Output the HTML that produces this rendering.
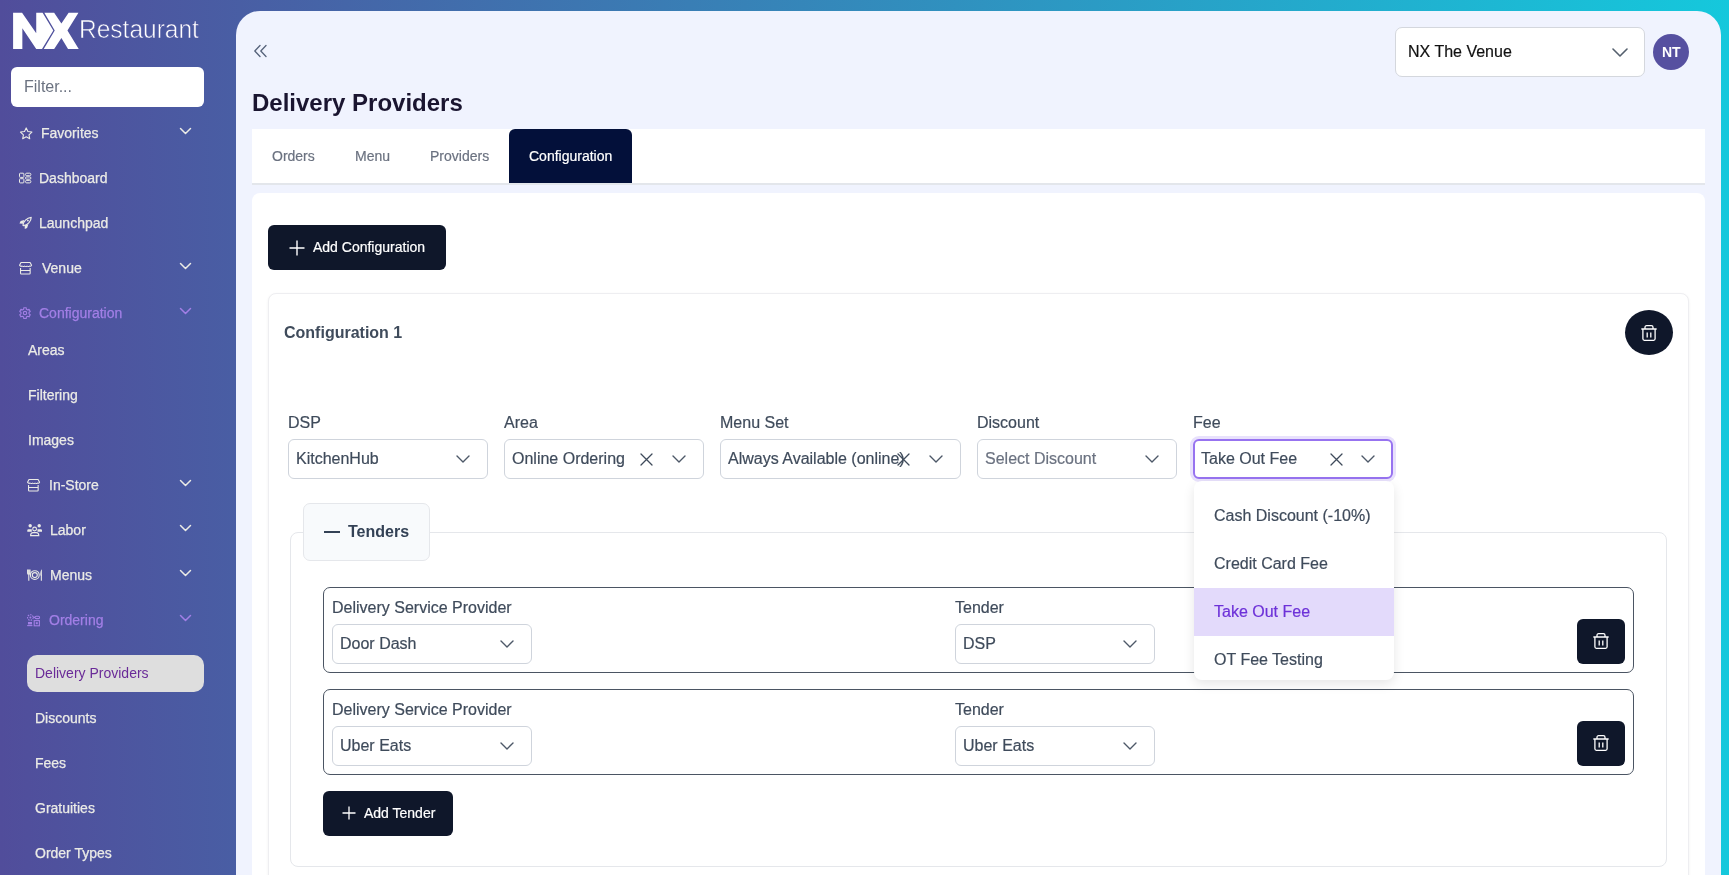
<!DOCTYPE html>
<html><head><meta charset="utf-8">
<style>
html,body{margin:0;padding:0;width:1729px;height:875px;overflow:hidden;font-family:"Liberation Sans",sans-serif;}
body{position:relative;background:linear-gradient(90deg,#514d9b 0%,#15c8dc 100%);}
.a{position:absolute;}
.t{position:absolute;white-space:nowrap;line-height:1;will-change:transform;}
.side{color:#e6e6ee;font-size:14px;}
.ic{position:absolute;}
.panel{position:absolute;left:236px;top:11px;width:1485px;height:900px;background:#f0f3fe;border-radius:24px;}
.sel{position:absolute;background:#fff;border:1px solid #cfd4dc;border-radius:6px;box-sizing:border-box;}
.lbl{position:absolute;white-space:nowrap;line-height:1;font-size:16px;color:#475569;}
.btn{position:absolute;background:#0f172a;border-radius:6px;}
</style></head><body>

<!-- SIDEBAR -->
<svg class="a" style="left:5px;top:5px" width="100" height="50" viewBox="0 0 1729 864">
<polygon fill="#fff" points="140,135 295,135 540,490 540,135 650,135 835,440 640,760 540,760 300,400 300,760 140,760"/>
<polygon fill="#fff" points="680,135 850,135 975,320 1100,135 1270,135 1080,440 1275,760 1090,760 975,570 850,760 670,760 860,440"/>
</svg>
<div class="t" style="left:79.3px;top:18.3px;font-size:24.5px;color:#fff;-webkit-text-stroke:0.55px #4e559f;transform:scaleY(1.08);transform-origin:0 21px;">Restaurant</div>

<div class="a" style="left:11px;top:67px;width:193px;height:40px;background:#fff;border-radius:6px;"></div>
<div class="t" style="left:24px;top:79px;font-size:16px;color:#6b7280;">Filter...</div>

<!--SIDE-->
<svg class="ic" style="left:18px;top:126px" width="16" height="15" viewBox="18 126 16 15"><polygon points="26.20,127.90 27.90,131.55 31.91,132.05 28.96,134.80 29.73,138.75 26.20,136.80 22.67,138.75 23.44,134.80 20.49,132.05 24.50,131.55" fill="none" stroke="#ebebe6" stroke-width="1.1" stroke-linejoin="round"/></svg>
<svg class="ic" style="left:18px;top:172px" width="15" height="13" viewBox="18 172 15 13"><rect x="19.5" y="173.2" width="4.4" height="4.2" rx="0.8" fill="none" stroke="#ebebe6" stroke-width="1"/><rect x="19.5" y="178.7" width="4.4" height="4.2" rx="0.8" fill="none" stroke="#ebebe6" stroke-width="1"/><rect x="25.5" y="173.2" width="5.4" height="2.5" rx="1.2" fill="none" stroke="#ebebe6" stroke-width="1"/><rect x="25.5" y="176.9" width="5.4" height="2.3" rx="1.1" fill="none" stroke="#ebebe6" stroke-width="1"/><rect x="25.5" y="180.4" width="5.4" height="2.5" rx="1.2" fill="none" stroke="#ebebe6" stroke-width="1"/></svg>
<svg class="ic" style="left:18px;top:215px" width="15" height="15" viewBox="18 215 15 15"><g transform="translate(19 216.5)"><path d="M3.9 8.7 C4.3 5.2 7.6 1.2 12.2 0.8 C12.2 5 8.6 8.6 4.4 9.2 Z" fill="none" stroke="#ebebe6" stroke-width="1.2" stroke-linejoin="round"/><path d="M5.2 3.4 L1.6 4.6 L0.5 7 L4.3 7.3 Z M9.4 7.7 L8.1 11.5 L5.8 12.6 L5.6 8.8 Z" fill="#ebebe6"/><circle cx="8.9" cy="4.1" r="0.9" fill="#ebebe6"/></g></svg>
<svg class="ic" style="left:18.3px;top:261px" width="16" height="15" viewBox="18.3 261 16 15"><g transform="translate(19.3 262)"><path d="M0.55 3.3 L2 0.5 H11.1 L12.55 3.3 Q11.8 4.8 10.4 4.1 Q9.3 4.9 8.05 4.1 Q6.85 4.9 5.55 4.1 Q4.35 4.9 3.1 4.1 Q1.5 4.8 0.55 3.3 Z" fill="none" stroke="#ebebe6" stroke-width="1.1" stroke-linejoin="round"/><path d="M1.55 6 V11.2 Q1.55 12 2.35 12 H10.35 Q11.15 12 11.15 11.2 V6 M1.55 8.5 H11.15" fill="none" stroke="#ebebe6" stroke-width="1.1"/></g></svg>
<svg class="ic" style="left:17px;top:305px" width="16" height="16" viewBox="17 305 16 16"><polygon points="23.76,307.74 26.24,307.74 26.33,309.22 27.69,310.01 29.02,309.35 30.26,311.49 29.02,312.32 29.02,313.88 30.26,314.71 29.02,316.85 27.69,316.19 26.33,316.98 26.24,318.46 23.76,318.46 23.67,316.98 22.31,316.19 20.98,316.85 19.74,314.71 20.98,313.88 20.98,312.32 19.74,311.49 20.98,309.35 22.31,310.01 23.67,309.22" fill="none" stroke="#a27fe6" stroke-width="1.1" stroke-linejoin="round"/><circle cx="25" cy="313.1" r="1.7" fill="none" stroke="#a27fe6" stroke-width="1.1"/></svg>
<svg class="ic" style="left:26.2px;top:478px" width="16" height="15" viewBox="26.2 478 16 15"><g transform="translate(27.2 479)"><path d="M0.55 3.3 L2 0.5 H11.1 L12.55 3.3 Q11.8 4.8 10.4 4.1 Q9.3 4.9 8.05 4.1 Q6.85 4.9 5.55 4.1 Q4.35 4.9 3.1 4.1 Q1.5 4.8 0.55 3.3 Z" fill="none" stroke="#ebebe6" stroke-width="1.1" stroke-linejoin="round"/><path d="M1.55 6 V11.2 Q1.55 12 2.35 12 H10.35 Q11.15 12 11.15 11.2 V6 M1.55 8.5 H11.15" fill="none" stroke="#ebebe6" stroke-width="1.1"/></g></svg>
<svg class="ic" style="left:26px;top:523px" width="17" height="15" viewBox="26 523 17 15"><circle cx="30.2" cy="525.8" r="1.7" fill="#ebebe6"/><circle cx="39.2" cy="525.8" r="1.7" fill="#ebebe6"/><path d="M27.3 531.8 V530.3 Q27.3 529.2 28.5 529.2 H31.8 V531.8 Z M42 531.8 V530.3 Q42 529.2 40.8 529.2 H37.5 V531.8 Z" fill="#ebebe6"/><circle cx="34.6" cy="529" r="1.9" fill="none" stroke="#ebebe6" stroke-width="1.1"/><path d="M30.6 535.6 Q30.6 532.6 33 532.6 H36.3 Q38.8 532.6 38.8 535.6 Z" fill="none" stroke="#ebebe6" stroke-width="1.1"/></svg>
<svg class="ic" style="left:26px;top:568px" width="17" height="14" viewBox="26 568 17 14"><path d="M27.6 569.5 V573.3 Q27.6 574.5 28.8 574.5 Q30 574.5 30 573.3 V569.5 M28.8 569.5 V580.7" fill="none" stroke="#ebebe6" stroke-width="1.1"/><path d="M41.9 569.3 C40.5 570.5 40.2 572.6 40.3 575.6 H41.9 Z" fill="#ebebe6"/><path d="M41.35 575 V580.8" fill="none" stroke="#ebebe6" stroke-width="1.1"/><circle cx="34.8" cy="575.1" r="4.4" fill="none" stroke="#ebebe6" stroke-width="1.1"/><circle cx="34.8" cy="575.1" r="2.5" fill="none" stroke="#ebebe6" stroke-width="1.1"/></svg>
<svg class="ic" style="left:26px;top:613px" width="15" height="15" viewBox="26 613 15 15"><circle cx="30.4" cy="617.5" r="2.8" fill="none" stroke="#a27fe6" stroke-width="1.1" stroke-dasharray="1.6 0.9"/><circle cx="30.4" cy="617.5" r="1" fill="#a27fe6"/><path d="M33.2 617.4 H35" fill="none" stroke="#a27fe6" stroke-width="1.1"/><rect x="35" y="616.2" width="4.6" height="2.4" rx="1.2" fill="none" stroke="#a27fe6" stroke-width="1.1"/><rect x="28" y="622" width="4" height="2.4" fill="#a27fe6"/><path d="M27.2 625.6 H32.4" fill="none" stroke="#a27fe6" stroke-width="1.1"/><rect x="34.2" y="620.6" width="5.2" height="5.2" fill="none" stroke="#a27fe6" stroke-width="1.1"/><rect x="35.8" y="622.2" width="2" height="2" fill="#a27fe6"/></svg>
<div class="t" style="left:41px;top:126.0px;font-size:14px;color:#ebebe6;-webkit-text-stroke:0.25px #ebebe6;">Favorites</div>
<svg class="ic" style="left:179px;top:127px" width="13" height="8" viewBox="0 0 13 8"><path d="M1.5 1.5 L6.5 6.5 L11.5 1.5" fill="none" stroke="#ebebe6" stroke-width="1.5" stroke-linecap="round" stroke-linejoin="round"/></svg>
<div class="t" style="left:39.3px;top:171.0px;font-size:14px;color:#ebebe6;-webkit-text-stroke:0.25px #ebebe6;">Dashboard</div>
<div class="t" style="left:39.3px;top:216.0px;font-size:14px;color:#ebebe6;-webkit-text-stroke:0.25px #ebebe6;">Launchpad</div>
<div class="t" style="left:41.5px;top:261.0px;font-size:14px;color:#ebebe6;-webkit-text-stroke:0.25px #ebebe6;">Venue</div>
<svg class="ic" style="left:179px;top:262px" width="13" height="8" viewBox="0 0 13 8"><path d="M1.5 1.5 L6.5 6.5 L11.5 1.5" fill="none" stroke="#ebebe6" stroke-width="1.5" stroke-linecap="round" stroke-linejoin="round"/></svg>
<div class="t" style="left:39.4px;top:306.0px;font-size:14px;color:#a27fe6;-webkit-text-stroke:0.25px #a27fe6;">Configuration</div>
<svg class="ic" style="left:179px;top:307px" width="13" height="8" viewBox="0 0 13 8"><path d="M1.5 1.5 L6.5 6.5 L11.5 1.5" fill="none" stroke="#a27fe6" stroke-width="1.5" stroke-linecap="round" stroke-linejoin="round"/></svg>
<div class="t" style="left:48.7px;top:478.0px;font-size:14px;color:#ebebe6;-webkit-text-stroke:0.25px #ebebe6;">In-Store</div>
<svg class="ic" style="left:179px;top:479px" width="13" height="8" viewBox="0 0 13 8"><path d="M1.5 1.5 L6.5 6.5 L11.5 1.5" fill="none" stroke="#ebebe6" stroke-width="1.5" stroke-linecap="round" stroke-linejoin="round"/></svg>
<div class="t" style="left:50px;top:523.0px;font-size:14px;color:#ebebe6;-webkit-text-stroke:0.25px #ebebe6;">Labor</div>
<svg class="ic" style="left:179px;top:524px" width="13" height="8" viewBox="0 0 13 8"><path d="M1.5 1.5 L6.5 6.5 L11.5 1.5" fill="none" stroke="#ebebe6" stroke-width="1.5" stroke-linecap="round" stroke-linejoin="round"/></svg>
<div class="t" style="left:49.8px;top:568.0px;font-size:14px;color:#ebebe6;-webkit-text-stroke:0.25px #ebebe6;">Menus</div>
<svg class="ic" style="left:179px;top:569px" width="13" height="8" viewBox="0 0 13 8"><path d="M1.5 1.5 L6.5 6.5 L11.5 1.5" fill="none" stroke="#ebebe6" stroke-width="1.5" stroke-linecap="round" stroke-linejoin="round"/></svg>
<div class="t" style="left:48.7px;top:613.0px;font-size:14px;color:#a27fe6;-webkit-text-stroke:0.25px #a27fe6;">Ordering</div>
<svg class="ic" style="left:179px;top:614px" width="13" height="8" viewBox="0 0 13 8"><path d="M1.5 1.5 L6.5 6.5 L11.5 1.5" fill="none" stroke="#a27fe6" stroke-width="1.5" stroke-linecap="round" stroke-linejoin="round"/></svg>
<div class="t" style="left:27.5px;top:343.0px;font-size:14px;color:#ebebe6;-webkit-text-stroke:0.25px #ebebe6;">Areas</div>
<div class="t" style="left:27.5px;top:388.0px;font-size:14px;color:#ebebe6;-webkit-text-stroke:0.25px #ebebe6;">Filtering</div>
<div class="t" style="left:27.5px;top:433.0px;font-size:14px;color:#ebebe6;-webkit-text-stroke:0.25px #ebebe6;">Images</div>
<div class="a" style="left:27px;top:655px;width:177px;height:37px;background:#dedede;border-radius:10px;"></div>
<div class="t" style="left:35px;top:666.0px;font-size:14px;color:#6a2b98;">Delivery Providers</div>
<div class="t" style="left:35px;top:711.0px;font-size:14px;color:#ebebe6;-webkit-text-stroke:0.25px #ebebe6;">Discounts</div>
<div class="t" style="left:35px;top:756.0px;font-size:14px;color:#ebebe6;-webkit-text-stroke:0.25px #ebebe6;">Fees</div>
<div class="t" style="left:35px;top:801.0px;font-size:14px;color:#ebebe6;-webkit-text-stroke:0.25px #ebebe6;">Gratuities</div>
<div class="t" style="left:35px;top:846.0px;font-size:14px;color:#ebebe6;-webkit-text-stroke:0.25px #ebebe6;">Order Types</div>
<!--/SIDE-->

<!-- MAIN PANEL -->
<div class="panel"></div>
<!--MAIN-->
<svg class="ic" style="left:253px;top:44px" width="15" height="14" viewBox="0 0 15 14"><path d="M7 1.5 L1.8 7 L7 12.5 M13 1.5 L7.8 7 L13 12.5" fill="none" stroke="#55627a" stroke-width="1.3" stroke-linecap="round" stroke-linejoin="round"/></svg>
<div class="t" style="left:252px;top:90.5px;font-size:24px;color:#1a1530;font-weight:700">Delivery Providers</div>
<div class="sel" style="left:1395px;top:27px;width:250px;height:50px;border-color:#d4d7dd;border-radius:7px"></div>
<div class="t" style="left:1408px;top:43.5px;font-size:16px;color:#111;-webkit-text-stroke:0.2px #111;">NX The Venue</div>
<svg class="ic" style="left:1612px;top:48px" width="16" height="9" viewBox="0 0 16 9"><path d="M1 1 L8.0 8 L15 1" fill="none" stroke="#55606e" stroke-width="1.6" stroke-linecap="round" stroke-linejoin="round"/></svg>
<div class="a" style="left:1653px;top:34px;width:36px;height:36px;border-radius:50%;background:#5650a0"></div>
<div class="t" style="left:1661.5px;top:45.0px;font-size:14px;color:#fff;font-weight:700">NT</div>
<div class="a" style="left:252px;top:129px;width:1453px;height:54px;background:#fff;border-bottom:2px solid #e3e6eb"></div>
<div class="t" style="left:272px;top:149.0px;font-size:14px;color:#6b7280;-webkit-text-stroke:0.2px #6b7280;">Orders</div>
<div class="t" style="left:355px;top:149.0px;font-size:14px;color:#6b7280;-webkit-text-stroke:0.2px #6b7280;">Menu</div>
<div class="t" style="left:430px;top:149.0px;font-size:14px;color:#6b7280;-webkit-text-stroke:0.2px #6b7280;">Providers</div>
<div class="a" style="left:509px;top:129px;width:123px;height:54px;background:#03103a;border-radius:6px 6px 0 0"></div>
<div class="t" style="left:528.5px;top:149.0px;font-size:14px;color:#fff;-webkit-text-stroke:0.2px #fff;">Configuration</div>
<div class="a" style="left:252px;top:193px;width:1453px;height:720px;background:#fff;border-radius:8px"></div>
<div class="btn" style="left:268px;top:225px;width:178px;height:45px"></div>
<svg class="ic" style="left:289px;top:240px" width="16" height="16" viewBox="0 0 16 16"><path d="M8.0 0.5 V15.5 M0.5 8.0 H15.5" stroke="#fff" stroke-width="1.4"/></svg>
<div class="t" style="left:312.5px;top:240.0px;font-size:14px;color:#fff;-webkit-text-stroke:0.2px #fff">Add Configuration</div>
<div class="a" style="left:268px;top:293px;width:1421px;height:620px;background:#fff;border:1px solid #eeeef1;border-radius:8px;box-sizing:border-box;box-shadow:0 1px 3px rgba(0,0,0,0.06)"></div>
<div class="t" style="left:284px;top:325.0px;font-size:16px;color:#3f4b5b;font-weight:700">Configuration 1</div>
<div class="a" style="left:1625px;top:310px;width:48px;height:45px;border-radius:50%;background:#0f172a"></div>
<svg class="ic" style="left:1641px;top:325px" width="16" height="16" viewBox="0 0 16 16"><path d="M4 4 V2.3 C4 1.3 4.6 0.7 5.6 0.7 H10.4 C11.4 0.7 12 1.3 12 2.3 V4" fill="none" stroke="#fff" stroke-width="1.3"/><path d="M0.8 4 H15.2" stroke="#fff" stroke-width="1.3" stroke-linecap="round"/><path d="M1.9 4 V13.8 C1.9 14.7 2.5 15.3 3.4 15.3 H12.6 C13.5 15.3 14.1 14.7 14.1 13.8 V4" fill="none" stroke="#fff" stroke-width="1.3"/><path d="M6.2 7.4 V12.4 M9.8 7.4 V12.4" stroke="#fff" stroke-width="1.3"/></svg>
<div class="t" style="left:288px;top:415.0px;font-size:16px;color:#3f4b5b;-webkit-text-stroke:0.2px #3f4b5b;">DSP</div>
<div class="sel" style="left:288px;top:439px;width:200px;height:40px"></div>
<div class="t" style="left:296px;top:451.0px;font-size:16px;color:#3f4b5b;-webkit-text-stroke:0.2px #3f4b5b;">KitchenHub</div>
<svg class="ic" style="left:456px;top:455.0px" width="14" height="8" viewBox="0 0 14 8"><path d="M1 1 L7.0 7 L13 1" fill="none" stroke="#4d5868" stroke-width="1.4" stroke-linecap="round" stroke-linejoin="round"/></svg>
<div class="t" style="left:504px;top:415.0px;font-size:16px;color:#3f4b5b;-webkit-text-stroke:0.2px #3f4b5b;">Area</div>
<div class="sel" style="left:504px;top:439px;width:200px;height:40px"></div>
<div class="t" style="left:512px;top:451.0px;font-size:16px;color:#3f4b5b;-webkit-text-stroke:0.2px #3f4b5b;">Online Ordering</div>
<svg class="ic" style="left:672px;top:455.0px" width="14" height="8" viewBox="0 0 14 8"><path d="M1 1 L7.0 7 L13 1" fill="none" stroke="#4d5868" stroke-width="1.4" stroke-linecap="round" stroke-linejoin="round"/></svg>
<svg class="ic" style="left:640px;top:452.5px" width="13" height="13" viewBox="0 0 13 13"><path d="M1 1 L12 12 M12 1 L1 12" fill="none" stroke="#3f4b5b" stroke-width="1.3" stroke-linecap="round"/></svg>
<div class="t" style="left:720px;top:415.0px;font-size:16px;color:#3f4b5b;-webkit-text-stroke:0.2px #3f4b5b;">Menu Set</div>
<div class="sel" style="left:720px;top:439px;width:241px;height:40px"></div>
<div class="t" style="left:728px;top:451.0px;font-size:16px;color:#3f4b5b;-webkit-text-stroke:0.2px #3f4b5b;">Always Available (online)</div>
<svg class="ic" style="left:929px;top:455.0px" width="14" height="8" viewBox="0 0 14 8"><path d="M1 1 L7.0 7 L13 1" fill="none" stroke="#4d5868" stroke-width="1.4" stroke-linecap="round" stroke-linejoin="round"/></svg>
<svg class="ic" style="left:897px;top:452.5px" width="13" height="13" viewBox="0 0 13 13"><path d="M1 1 L12 12 M12 1 L1 12" fill="none" stroke="#3f4b5b" stroke-width="1.3" stroke-linecap="round"/></svg>
<div class="t" style="left:977px;top:415.0px;font-size:16px;color:#3f4b5b;-webkit-text-stroke:0.2px #3f4b5b;">Discount</div>
<div class="sel" style="left:977px;top:439px;width:200px;height:40px"></div>
<div class="t" style="left:985px;top:451.0px;font-size:16px;color:#6b7280;-webkit-text-stroke:0.2px #6b7280;">Select Discount</div>
<svg class="ic" style="left:1145px;top:455.0px" width="14" height="8" viewBox="0 0 14 8"><path d="M1 1 L7.0 7 L13 1" fill="none" stroke="#4d5868" stroke-width="1.4" stroke-linecap="round" stroke-linejoin="round"/></svg>
<div class="t" style="left:1193px;top:415.0px;font-size:16px;color:#3f4b5b;-webkit-text-stroke:0.2px #3f4b5b;">Fee</div>
<div class="a" style="left:290px;top:532px;width:1377px;height:335px;border:1px solid #e5e7eb;border-radius:8px;box-sizing:border-box"></div>
<div class="a" style="left:303px;top:503px;width:127px;height:58px;background:#f8fafc;border:1px solid #e5e7eb;border-radius:7px;box-sizing:border-box"></div>
<div class="a" style="left:324px;top:530.5px;width:15.5px;height:2px;background:#334155"></div>
<div class="t" style="left:347.5px;top:524.0px;font-size:16px;color:#334155;font-weight:700">Tenders</div>
<div class="a" style="left:323px;top:587px;width:1311px;height:86px;border:1px solid #4b5563;border-radius:7px;box-sizing:border-box"></div>
<div class="t" style="left:332px;top:600.0px;font-size:16px;color:#3f4b5b;-webkit-text-stroke:0.2px #3f4b5b;">Delivery Service Provider</div>
<div class="sel" style="left:332px;top:624px;width:200px;height:39.5px"></div>
<div class="t" style="left:340px;top:635.75px;font-size:16px;color:#3f4b5b;-webkit-text-stroke:0.2px #3f4b5b;">Door Dash</div>
<svg class="ic" style="left:500px;top:639.75px" width="14" height="8" viewBox="0 0 14 8"><path d="M1 1 L7.0 7 L13 1" fill="none" stroke="#4d5868" stroke-width="1.4" stroke-linecap="round" stroke-linejoin="round"/></svg>
<div class="t" style="left:955px;top:600.0px;font-size:16px;color:#3f4b5b;-webkit-text-stroke:0.2px #3f4b5b;">Tender</div>
<div class="sel" style="left:955px;top:624px;width:200px;height:39.5px"></div>
<div class="t" style="left:963px;top:635.75px;font-size:16px;color:#3f4b5b;-webkit-text-stroke:0.2px #3f4b5b;">DSP</div>
<svg class="ic" style="left:1123px;top:639.75px" width="14" height="8" viewBox="0 0 14 8"><path d="M1 1 L7.0 7 L13 1" fill="none" stroke="#4d5868" stroke-width="1.4" stroke-linecap="round" stroke-linejoin="round"/></svg>
<div class="btn" style="left:1577px;top:619px;width:48px;height:45px"></div>
<svg class="ic" style="left:1593px;top:633px" width="16" height="16" viewBox="0 0 16 16"><path d="M4 4 V2.3 C4 1.3 4.6 0.7 5.6 0.7 H10.4 C11.4 0.7 12 1.3 12 2.3 V4" fill="none" stroke="#fff" stroke-width="1.3"/><path d="M0.8 4 H15.2" stroke="#fff" stroke-width="1.3" stroke-linecap="round"/><path d="M1.9 4 V13.8 C1.9 14.7 2.5 15.3 3.4 15.3 H12.6 C13.5 15.3 14.1 14.7 14.1 13.8 V4" fill="none" stroke="#fff" stroke-width="1.3"/><path d="M6.2 7.4 V12.4 M9.8 7.4 V12.4" stroke="#fff" stroke-width="1.3"/></svg>
<div class="a" style="left:323px;top:689px;width:1311px;height:86px;border:1px solid #4b5563;border-radius:7px;box-sizing:border-box"></div>
<div class="t" style="left:332px;top:702.0px;font-size:16px;color:#3f4b5b;-webkit-text-stroke:0.2px #3f4b5b;">Delivery Service Provider</div>
<div class="sel" style="left:332px;top:726px;width:200px;height:39.5px"></div>
<div class="t" style="left:340px;top:737.75px;font-size:16px;color:#3f4b5b;-webkit-text-stroke:0.2px #3f4b5b;">Uber Eats</div>
<svg class="ic" style="left:500px;top:741.75px" width="14" height="8" viewBox="0 0 14 8"><path d="M1 1 L7.0 7 L13 1" fill="none" stroke="#4d5868" stroke-width="1.4" stroke-linecap="round" stroke-linejoin="round"/></svg>
<div class="t" style="left:955px;top:702.0px;font-size:16px;color:#3f4b5b;-webkit-text-stroke:0.2px #3f4b5b;">Tender</div>
<div class="sel" style="left:955px;top:726px;width:200px;height:39.5px"></div>
<div class="t" style="left:963px;top:737.75px;font-size:16px;color:#3f4b5b;-webkit-text-stroke:0.2px #3f4b5b;">Uber Eats</div>
<svg class="ic" style="left:1123px;top:741.75px" width="14" height="8" viewBox="0 0 14 8"><path d="M1 1 L7.0 7 L13 1" fill="none" stroke="#4d5868" stroke-width="1.4" stroke-linecap="round" stroke-linejoin="round"/></svg>
<div class="btn" style="left:1577px;top:721px;width:48px;height:45px"></div>
<svg class="ic" style="left:1593px;top:735px" width="16" height="16" viewBox="0 0 16 16"><path d="M4 4 V2.3 C4 1.3 4.6 0.7 5.6 0.7 H10.4 C11.4 0.7 12 1.3 12 2.3 V4" fill="none" stroke="#fff" stroke-width="1.3"/><path d="M0.8 4 H15.2" stroke="#fff" stroke-width="1.3" stroke-linecap="round"/><path d="M1.9 4 V13.8 C1.9 14.7 2.5 15.3 3.4 15.3 H12.6 C13.5 15.3 14.1 14.7 14.1 13.8 V4" fill="none" stroke="#fff" stroke-width="1.3"/><path d="M6.2 7.4 V12.4 M9.8 7.4 V12.4" stroke="#fff" stroke-width="1.3"/></svg>
<div class="btn" style="left:323px;top:791px;width:130px;height:45px"></div>
<svg class="ic" style="left:341.5px;top:806px" width="14" height="14" viewBox="0 0 14 14"><path d="M7.0 0.5 V13.5 M0.5 7.0 H13.5" stroke="#fff" stroke-width="1.3"/></svg>
<div class="t" style="left:363.5px;top:806.0px;font-size:14px;color:#fff;-webkit-text-stroke:0.2px #fff">Add Tender</div>
<div class="a" style="left:1190px;top:436px;width:206px;height:46px;border-radius:9px;background:#e8e1fc"></div>
<div class="sel" style="left:1193px;top:439px;width:200px;height:40px;border:2px solid #9773f0"></div>
<div class="t" style="left:1201px;top:450.5px;font-size:16px;color:#3f4b5b;-webkit-text-stroke:0.2px #3f4b5b;">Take Out Fee</div>
<svg class="ic" style="left:1329.5px;top:452.5px" width="13" height="13" viewBox="0 0 13 13"><path d="M1 1 L12 12 M12 1 L1 12" fill="none" stroke="#3f4b5b" stroke-width="1.3" stroke-linecap="round"/></svg>
<svg class="ic" style="left:1360.5px;top:454.5px" width="14" height="8" viewBox="0 0 14 8"><path d="M1 1 L7.0 7 L13 1" fill="none" stroke="#4d5868" stroke-width="1.4" stroke-linecap="round" stroke-linejoin="round"/></svg>
<div class="a" style="left:1194px;top:481px;width:200px;height:199px;background:#fff;border-radius:8px;box-shadow:0 4px 12px rgba(0,0,0,0.10);overflow:hidden"><div class="a" style="left:0;top:107px;width:200px;height:48px;background:#e3dafb"></div></div>
<div class="t" style="left:1213.5px;top:508.0px;font-size:16px;color:#3f4b5b;-webkit-text-stroke:0.2px #3f4b5b;">Cash Discount (-10%)</div>
<div class="t" style="left:1213.5px;top:556.0px;font-size:16px;color:#3f4b5b;-webkit-text-stroke:0.2px #3f4b5b;">Credit Card Fee</div>
<div class="t" style="left:1213.5px;top:604.0px;font-size:16px;color:#6d31d8;-webkit-text-stroke:0.2px #6d31d8;">Take Out Fee</div>
<div class="t" style="left:1213.5px;top:652.0px;font-size:16px;color:#3f4b5b;-webkit-text-stroke:0.2px #3f4b5b;">OT Fee Testing</div>
<!--/MAIN-->

</body></html>
